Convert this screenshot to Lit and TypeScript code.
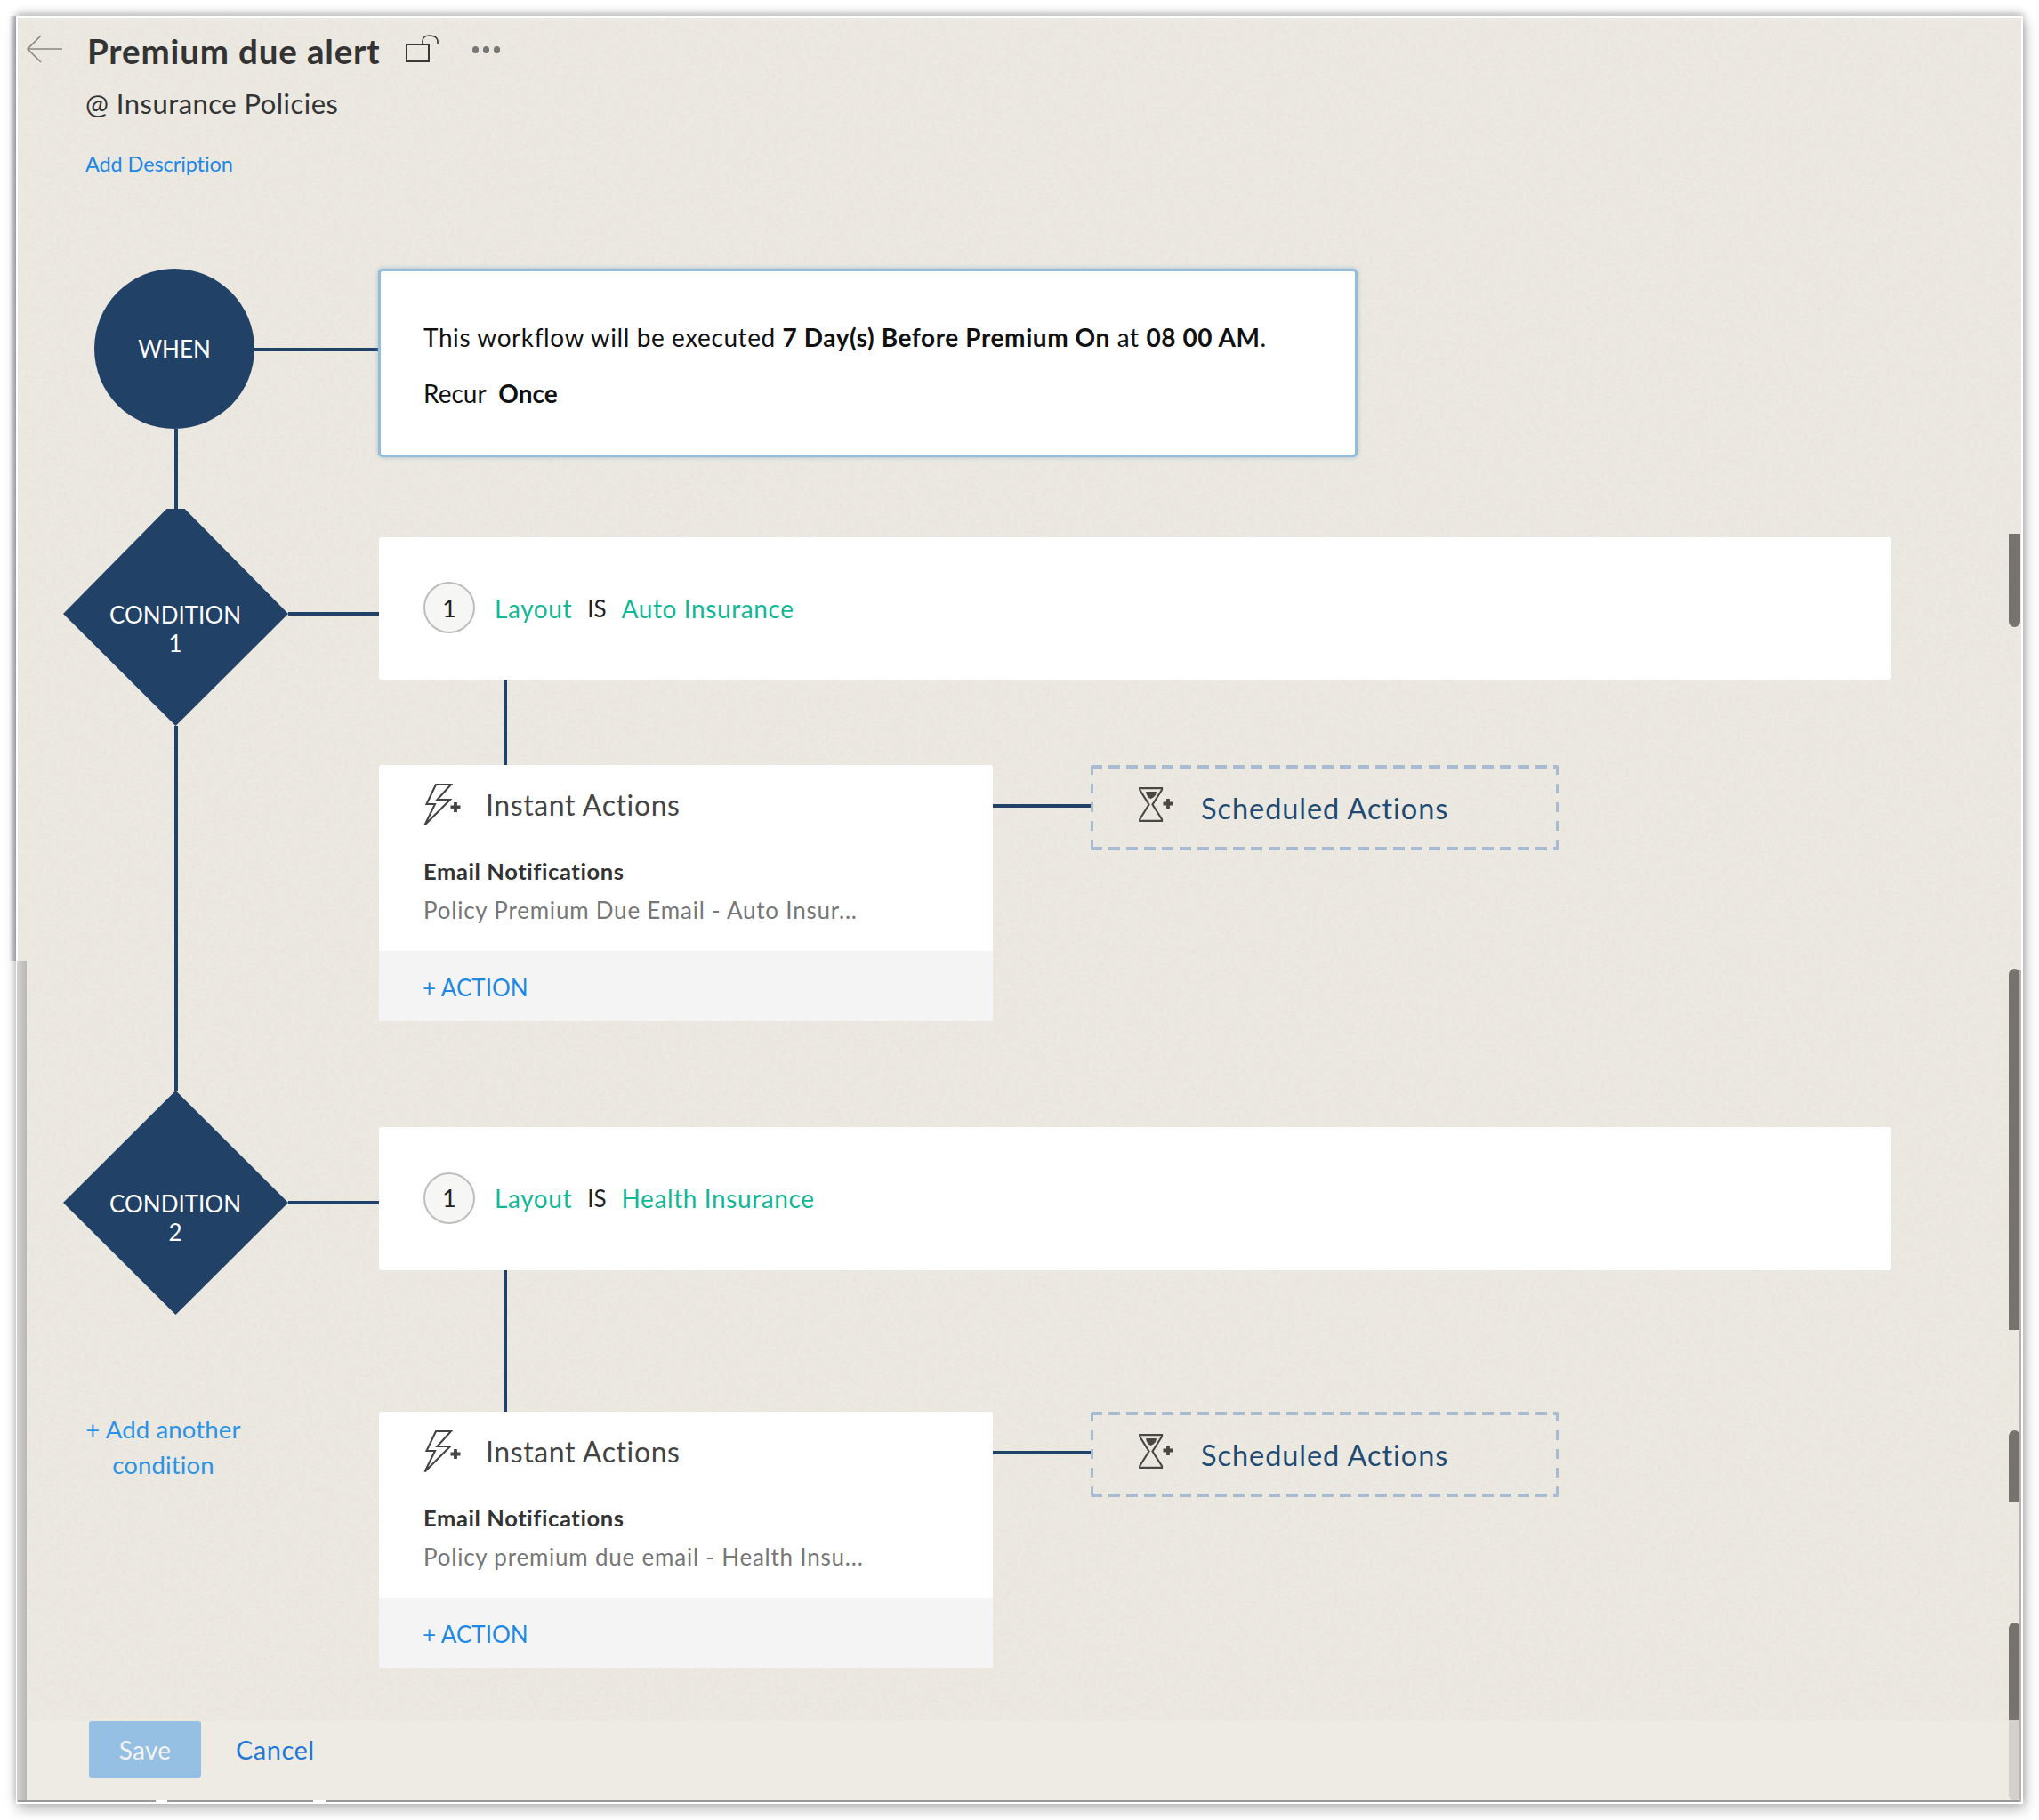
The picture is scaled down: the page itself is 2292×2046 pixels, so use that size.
import { LitElement, html, css } from "lit";
import { customElement } from "lit/decorators.js";

const bolt = html`<svg class="bolt" viewBox="0 0 42 48" width="42" height="48" fill="none" stroke="#444" stroke-width="2.1" stroke-linejoin="miter">
  <path d="M14 1 H31 L15.5 18 H30 L1.5 46.5 L13 23 H3.5 Z"/>
  <path d="M36 21 V32 M30.5 26.5 H41.5" stroke-width="3.8"/>
</svg>`;

const hourglass = html`<svg class="glass" viewBox="0 0 38 39" width="38" height="39" fill="none" stroke="#4a4743" stroke-width="2.2">
  <path d="M1.2 1.2 H26 V3 L15.5 19.5 L26 36 V37.8 H1.2 V36 L11.5 19.5 L1.2 3 Z"/>
  <path d="M8 5 H20 Q19.5 11 13.5 13 Q9 11.5 8 5 Z" fill="#4a4743" stroke="none"/>
  <path d="M33 13 V24 M27.5 18.5 H38.5" stroke-width="3.8"/>
</svg>`;

const SCROLL = [
  { top: 580, h: 105, r: "0 0 7px 7px", c: "#76736e" },
  { top: 1069, h: 406, r: "7px 7px 0 0", c: "#76736e" },
  { top: 1588, h: 80, r: "7px 7px 0 0", c: "#76736e" },
  { top: 1804, h: 110, r: "7px 7px 0 0", c: "#76736e" },
  { top: 1914, h: 90, r: "0 0 7px 7px", c: "#d4d1cc" },
];

@customElement("app-root")
export class AppRoot extends LitElement {
  static styles = css`
    :host {
      display: block;
      box-sizing: border-box;
      width: 2292px;
      height: 2046px;
      padding: 18px;
      background: #fff;
      overflow: hidden;
      font-family: Lato, "Liberation Sans", sans-serif;
      color: #222;
    }
    .win {
      position: relative;
      box-sizing: border-box;
      width: 2256px;
      height: 2010px;
      border: 2px solid #fff;
      background: #ece9e2;
      display: flex;
      flex-direction: column;
      box-shadow: 2px 6px 14px rgba(0, 0, 0, 0.28), 0 -4px 8px rgba(60, 55, 65, 0.28);
    }
    .shadow-left {
      position: absolute;
      left: -10px;
      top: -2px;
      width: 8px;
      height: 1062px;
      background: linear-gradient(to right, rgba(120, 115, 125, 0), rgba(120, 115, 125, 0.55));
    }
    .strip-left {
      position: absolute;
      left: -1px;
      top: 1060px;
      bottom: 0;
      width: 11px;
      background: linear-gradient(to right, #d2d0cf, #b9b8b6);
    }
    .line-bottom {
      position: absolute;
      left: 0;
      right: 0;
      bottom: 0;
      height: 2px;
      background: linear-gradient(to right, #999 155px, #fff 155px, #fff 168px, #999 168px, #999 332px, #fff 332px, #fff 346px, #999 346px);
    }
    .line-right {
      position: absolute;
      right: 0;
      top: 1070px;
      bottom: 0;
      width: 2px;
      background: #b5b4b2;
    }
    .grain {
      position: absolute;
      inset: 0;
      width: 100%;
      height: 100%;
    }
    .header,
    .flow,
    .footer {
      position: relative;
    }
    .header {
      height: 282px;
      box-sizing: border-box;
      padding-top: 15px;
    }
    .title-row {
      display: flex;
      align-items: center;
      height: 44px;
    }
    .back {
      margin-left: 9px;
      margin-top: -4px;
    }
    h1 {
      margin: 0 0 0 27px;
      font-size: 38.5px;
      font-weight: 700;
      line-height: 44px;
      color: #333;
      letter-spacing: 0.85px;
    }
    .lock {
      margin-left: 28px;
      margin-top: -6px;
    }
    .dots {
      display: flex;
      gap: 4.5px;
      margin-left: 38px;
      margin-top: -2px;
    }
    .dots i {
      width: 7.5px;
      height: 7.5px;
      border-radius: 50%;
      background: #777;
    }
    .module {
      margin: 17px 0 0 76px;
      font-size: 31px;
      line-height: 40px;
      color: #333;
      letter-spacing: 0.47px;
    }
    .desc {
      margin: 33px 0 0 76px;
      font-size: 23.5px;
      line-height: 30px;
      color: #1e88e5;
      letter-spacing: -0.1px;
    }
    .flow {
      flex: 1;
      display: flex;
      min-height: 0;
    }
    .spine {
      width: 406px;
      flex: none;
      display: flex;
      flex-direction: column;
    }
    .node-row {
      display: flex;
    }
    .node-row.when {
      align-items: center;
      margin-left: 86px;
    }
    .node-row.cond {
      margin-left: 51px;
    }
    .circle {
      width: 180px;
      height: 180px;
      border-radius: 50%;
      background: #214266;
      color: #fff;
      font-size: 26px;
      display: flex;
      align-items: center;
      justify-content: center;
    }
    .node-row.when .hline {
      margin-top: 2px;
    }
    .diamond {
      width: 253px;
      background: #214266;
      color: #fff;
      font-size: 26px;
      line-height: 32px;
      text-align: center;
      box-sizing: border-box;
      padding-right: 1px;
    }
    .diamond.one {
      height: 244px;
      padding-top: 103px;
      clip-path: polygon(46% 0, 54% 0, 100% 48.4%, 50% 100%, 0 48.4%);
    }
    .diamond.two {
      height: 252px;
      padding-top: 111px;
      clip-path: polygon(50% 0, 100% 50%, 50% 100%, 0 50%);
    }
    .hline {
      flex: 1;
      height: 4px;
      background: #214266;
    }
    .node-row.cond .hline.one {
      margin-top: 116px;
    }
    .node-row.cond .hline.two {
      margin-top: 124px;
    }
    .vline {
      width: 4px;
      background: #214266;
      flex: none;
    }
    .spine .vline {
      margin-left: 176px;
    }
    .add {
      margin: 109px 0 0 75px;
      width: 177px;
      font-size: 27.5px;
      line-height: 40px;
      text-align: center;
      color: #2a93e6;
      letter-spacing: 0.15px;
    }
    .cards {
      flex: 1;
      display: flex;
      flex-direction: column;
    }
    .card {
      background: #fff;
      border-radius: 3px;
      box-sizing: border-box;
    }
    .when-card {
      width: 1101px;
      height: 212px;
      margin-left: -1px;
      border-radius: 5px;
      padding: 57px 0 0 48px;
      border: 3px solid #94bcdb;
      font-size: 28px;
      color: #111;
      box-shadow: 0 0 5px rgba(120, 160, 195, 0.6);
    }
    .when-card p {
      margin: 0 0 29px;
      line-height: 34px;
    }
    .when-card p.long {
      letter-spacing: 0.58px;
    }
    .when-card b {
      font-weight: 700;
    }
    .cond-card {
      width: 1700px;
      height: 160px;
      display: flex;
      align-items: center;
      padding: 0 0 2px 50px;
      font-size: 28px;
    }
    .cond-card.first {
      margin-top: 90px;
    }
    .cond-card.second {
      margin-top: 119px;
      height: 161px;
    }
    .num {
      width: 58px;
      height: 58px;
      box-sizing: border-box;
      border: 2px solid #bdbdbb;
      border-radius: 50%;
      background: #f6f6f4;
      display: flex;
      align-items: center;
      justify-content: center;
      font-size: 27px;
      margin-right: 22px;
    }
    .teal {
      color: #12b896;
      letter-spacing: 0.6px;
      margin-top: 1px;
    }
    .is {
      margin: 1px 17px 0 17px;
      font-size: 26px;
      color: #222;
    }
    .cards .vline {
      margin-left: 140px;
    }
    .actions {
      display: flex;
      align-items: flex-start;
    }
    .act-card {
      width: 690px;
      height: 288px;
      display: flex;
      flex-direction: column;
      overflow: hidden;
    }
    .act-head {
      display: flex;
      align-items: center;
      height: 90px;
      padding: 0 0 2px 50px;
      box-sizing: border-box;
      font-size: 32px;
      color: #444;
      gap: 28px;
      letter-spacing: 0.6px;
    }
    .act-head .bolt {
      margin-top: 2px;
    }
    .act-body {
      flex: 1;
      padding-left: 50px;
    }
    .act-title {
      font-size: 25.5px;
      font-weight: 700;
      line-height: 30px;
      color: #333;
      margin-top: 14px;
      letter-spacing: 0.6px;
    }
    .act-text {
      font-size: 26px;
      line-height: 30px;
      color: #777;
      margin-top: 14px;
      letter-spacing: 0.78px;
    }
    .act-foot {
      height: 79px;
      background: #f4f4f4;
      display: flex;
      align-items: center;
      padding: 2px 0 0 49px;
      box-sizing: border-box;
      font-size: 26px;
      color: #1e88e5;
    }
    .link-h {
      width: 110px;
      height: 4px;
      margin-top: 44px;
      background: #214266;
    }
    .sched {
      width: 526px;
      height: 96px;
      box-sizing: border-box;
      border-radius: 2px;
      display: flex;
      align-items: center;
      padding-left: 54px;
      gap: 32px;
      font-size: 32.5px;
      letter-spacing: 0.95px;
      color: #214a72;
      background-image:
        repeating-linear-gradient(to right, #a9bbd0 0 13px, transparent 13px 20px),
        repeating-linear-gradient(to right, #a9bbd0 0 13px, transparent 13px 20px),
        repeating-linear-gradient(to bottom, #a9bbd0 0 11px, transparent 11px 21px),
        repeating-linear-gradient(to bottom, #a9bbd0 0 11px, transparent 11px 21px);
      background-size: 100% 4px, 100% 4px, 3px 100%, 3px 100%;
      background-position: left top, left bottom, left top, right top;
      background-repeat: no-repeat;
    }
    .glass {
      margin-top: -8px;
    }
    .footer {
      height: 91px;
      flex: none;
      background: #eeebe5;
      display: flex;
      align-items: flex-start;
      padding-left: 80px;
      gap: 39px;
    }
    .save {
      width: 126px;
      height: 64px;
      border-radius: 3px;
      background: #96c0e3;
      color: #f3f3ef;
      font-size: 28px;
      letter-spacing: 0.3px;
      display: flex;
      align-items: center;
      justify-content: center;
    }
    .cancel {
      font-size: 29px;
      line-height: 64px;
      letter-spacing: 0.5px;
      color: #1f78d8;
    }
    .scroll {
      position: absolute;
      left: 2238px;
      width: 13px;
    }
  `;

  private action(text: string) {
    return html`<div class="actions">
      <div class="card act-card">
        <div class="act-head">${bolt}<span>Instant Actions</span></div>
        <div class="act-body">
          <div class="act-title">Email Notifications</div>
          <div class="act-text">${text}</div>
        </div>
        <div class="act-foot">+ ACTION</div>
      </div>
      <div class="link-h"></div>
      <div class="sched">${hourglass}<span>Scheduled Actions</span></div>
    </div>`;
  }

  private cond(cls: string, value: string) {
    return html`<div class="card cond-card ${cls}">
      <span class="num">1</span>
      <span class="teal">Layout</span><span class="is">IS</span><span class="teal">${value}</span>
    </div>`;
  }

  render() {
    return html`<div class="win">
      <svg class="grain" aria-hidden="true">
        <filter id="paper">
          <feTurbulence type="fractalNoise" baseFrequency="0.25 0.35" numOctaves="3" seed="4"></feTurbulence>
          <feColorMatrix type="matrix" values="0 0 0 0 0.5  0 0 0 0 0.44  0 0 0 0 0.32  0.6 0 0 0 -0.22"></feColorMatrix>
        </filter>
        <rect width="100%" height="100%" filter="url(#paper)" opacity="0.26"></rect>
      </svg>
      <div class="shadow-left"></div>
      <header class="header">
        <div class="title-row">
          <svg class="back" width="42" height="32" viewBox="0 0 42 32" fill="none" stroke="#8a8782" stroke-width="1.6">
            <path d="M41 16 H2 M17 1 L2 16 L17 31"/>
          </svg>
          <h1>Premium due alert</h1>
          <svg class="lock" width="37" height="31" viewBox="0 0 37 31" fill="none" stroke="#3a3835" stroke-width="2">
            <path d="M1 11 H26 V30 H1 Z"/>
            <path d="M19 11 V7 C19 3.5 22 1 27 1 C32 1 36 3.5 36 7 V11" stroke-width="1.6"/>
          </svg>
          <div class="dots"><i></i><i></i><i></i></div>
        </div>
        <div class="module">@ Insurance Policies</div>
        <div class="desc">Add Description</div>
      </header>
      <div class="flow">
        <div class="spine">
          <div class="node-row when">
            <div class="circle">WHEN</div>
            <div class="hline"></div>
          </div>
          <div class="vline" style="height:90px"></div>
          <div class="node-row cond">
            <div class="diamond one">CONDITION<br />1</div>
            <div class="hline one"></div>
          </div>
          <div class="vline" style="height:410px"></div>
          <div class="node-row cond">
            <div class="diamond two">CONDITION<br />2</div>
            <div class="hline two"></div>
          </div>
          <div class="add">+ Add another condition</div>
        </div>
        <div class="cards">
          <div class="card when-card">
            <p class="long">This workflow will be executed <b>7 Day(s) Before Premium On</b> at <b>08 00 AM</b>.</p>
            <p>Recur&nbsp; <b>Once</b></p>
          </div>
          ${this.cond("first", "Auto Insurance")}
          <div class="vline" style="height:96px"></div>
          ${this.action("Policy Premium Due Email - Auto Insur...")}
          ${this.cond("second", "Health Insurance")}
          <div class="vline" style="height:159px"></div>
          ${this.action("Policy premium due email - Health Insu...")}
        </div>
      </div>
      <footer class="footer">
        <div class="save">Save</div>
        <div class="cancel">Cancel</div>
      </footer>
      ${SCROLL.map(
        (s) => html`<div class="scroll" style="top:${s.top}px;height:${s.h}px;border-radius:${s.r};background:${s.c}"></div>`
      )}
      <div class="strip-left"></div>
      <div class="line-bottom"></div>
      <div class="line-right"></div>
    </div>`;
  }
}
